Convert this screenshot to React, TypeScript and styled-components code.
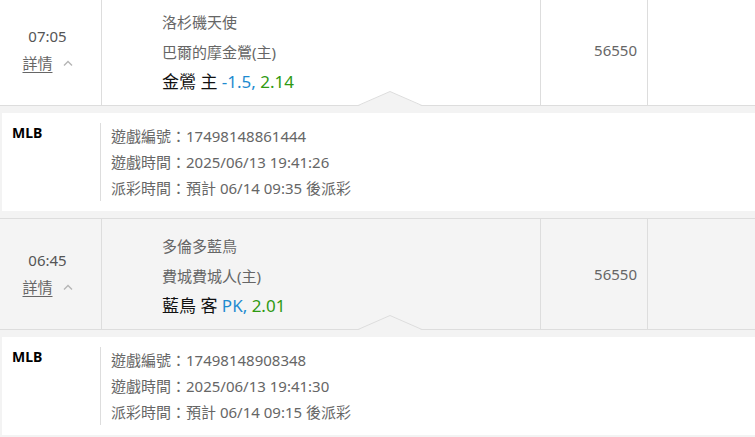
import React from 'react';
import styled, { createGlobalStyle } from 'styled-components';

interface Bet {
  time: string;
  away: string;
  home: string;
  pick: string;
  side: string;
  line: string;
  odds: string;
  amount: string;
  league: string;
  gameNo: string;
  gameTime: string;
  payout: string;
  shaded?: boolean;
}

const BETS: Bet[] = [
  {
    time: '07:05',
    away: '洛杉磯天使',
    home: '巴爾的摩金鶯(主)',
    pick: '金鶯',
    side: '主',
    line: '-1.5,',
    odds: '2.14',
    amount: '56550',
    league: 'MLB',
    gameNo: '17498148861444',
    gameTime: '2025/06/13 19:41:26',
    payout: '預計 06/14 09:35 後派彩',
  },
  {
    time: '06:45',
    away: '多倫多藍鳥',
    home: '費城費城人(主)',
    pick: '藍鳥',
    side: '客',
    line: 'PK,',
    odds: '2.01',
    amount: '56550',
    league: 'MLB',
    gameNo: '17498148908348',
    gameTime: '2025/06/13 19:41:30',
    payout: '預計 06/14 09:15 後派彩',
    shaded: true,
  },
];

const GlobalStyle = createGlobalStyle`
  body {
    margin: 0;
    background: #fff;
    font-family: "Noto Sans", "Noto Sans CJK TC", sans-serif;
    overflow: hidden;
  }
`;

const List = styled.div`
  margin-top: -6px;
  width: 755px;
`;

const Row = styled.div<{ $shaded?: boolean }>`
  display: grid;
  grid-template-columns: 102px 439px 107px 1fr;
  height: 110px;
  border-top: 1px solid #ddd;
  border-bottom: 1px solid #ddd;
  background: ${p => (p.$shaded ? '#f4f4f4' : '#fff')};
  & > div:not(:last-child) {
    border-right: 1px solid #ddd;
  }
`;

const TimeCell = styled.div`
  display: flex;
  flex-direction: column;
  align-items: center;
  justify-content: center;
  gap: 3px;
  padding: 0 6px 2px 0;
`;

const Time = styled.div`
  font-size: 15px;
  line-height: 24px;
  color: #555;
`;

const More = styled.div`
  display: flex;
  align-items: center;
  gap: 10px;
  font-size: 15px;
  line-height: 24px;
  color: #666;
  span {
    text-decoration: underline;
    text-underline-offset: 3px;
  }
`;

const TeamCell = styled.div`
  padding: 12px 0 0 60px;
`;

const Team = styled.div`
  font-size: 15px;
  line-height: 30px;
  color: #666;
`;

const Pick = styled.div`
  font-size: 17px;
  line-height: 30px;
  color: #111;
`;

const Line = styled.span`
  color: #1e8bd0;
`;

const Odds = styled.span`
  color: #2f9a12;
`;

const AmountCell = styled.div`
  display: flex;
  align-items: center;
  justify-content: flex-end;
  padding: 0 10px 0 0;
  font-size: 15px;
  color: #666;
`;

const Detail = styled.div`
  position: relative;
  background: #f3f3f3;
  padding: 7px 0 7px 2px;
`;

const Notch = styled.svg`
  position: absolute;
  top: -15px;
  left: 358px;
`;

const Panel = styled.div`
  display: flex;
  background: #fff;
  padding: 10px 0;
`;

const League = styled.div`
  width: 88px;
  padding-left: 10px;
  font-size: 14px;
  font-weight: 700;
  line-height: 20px;
  color: #000;
`;

const Info = styled.div`
  border-left: 1px solid #ddd;
  padding-left: 10px;
`;

const InfoLine = styled.div`
  font-size: 15px;
  line-height: 26px;
  color: #666;
`;

const Chevron = () => (
  <svg width="10" height="6" viewBox="0 0 10 6">
    <polyline points="1,5.5 5,1.5 9,5.5" fill="none" stroke="#b5b5b5" strokeWidth="1.4" />
  </svg>
);

export default function App() {
  return (
    <>
      <GlobalStyle />
      <List>
        {BETS.map((bet, i) => (
          <React.Fragment key={`bet-${i}`}>
            <Row $shaded={bet.shaded}>
              <TimeCell>
                <Time>{bet.time}</Time>
                <More>
                  <span>詳情</span>
                  <Chevron />
                </More>
              </TimeCell>
              <TeamCell>
                <Team>{bet.away}</Team>
                <Team>{bet.home}</Team>
                <Pick>
                  {bet.pick} {bet.side} <Line>{bet.line}</Line> <Odds>{bet.odds}</Odds>
                </Pick>
              </TeamCell>
              <AmountCell>{bet.amount}</AmountCell>
              <div />
            </Row>
            <Detail>
              <Notch width="64" height="15" viewBox="0 0 64 15">
                <polygon points="0,15 32,0.5 64,15" fill="#f3f3f3" />
                <polyline points="0,14.5 32,0.5 64,14.5" fill="none" stroke="#ddd" strokeWidth="1" />
              </Notch>
              <Panel>
                <League>{bet.league}</League>
                <Info>
                  <InfoLine>遊戲編號：{bet.gameNo}</InfoLine>
                  <InfoLine>遊戲時間：{bet.gameTime}</InfoLine>
                  <InfoLine>派彩時間：{bet.payout}</InfoLine>
                </Info>
              </Panel>
            </Detail>
          </React.Fragment>
        ))}
      </List>
    </>
  );
}
